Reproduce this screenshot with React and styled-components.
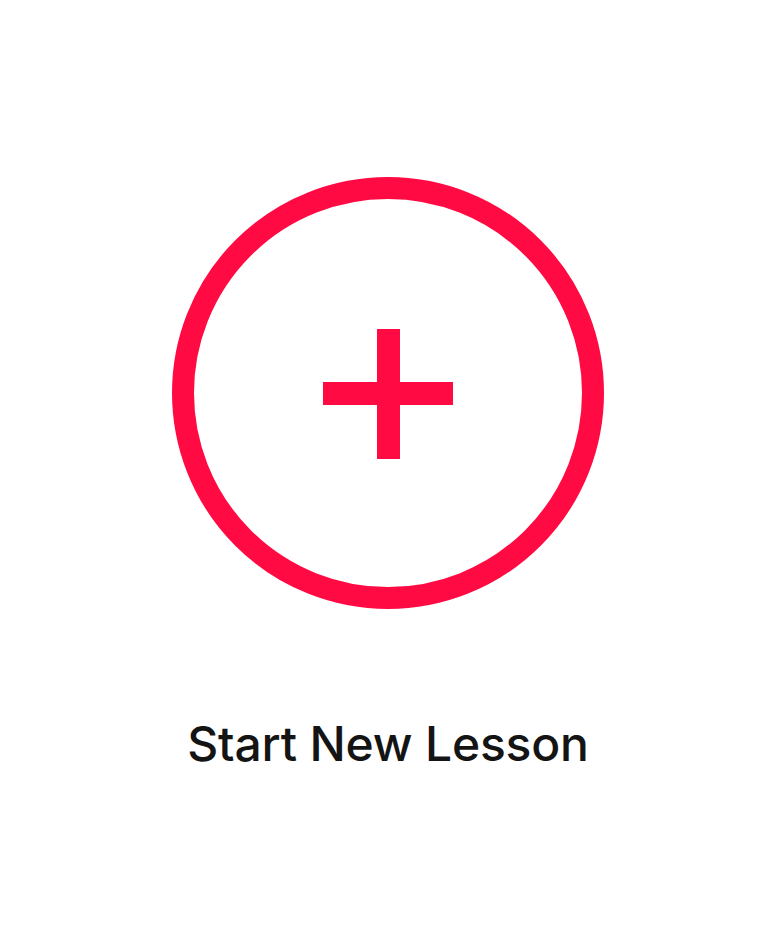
import React from 'react';
import styled, { createGlobalStyle } from 'styled-components';

const GlobalStyle = createGlobalStyle`
  html, body {
    margin: 0;
    padding: 0;
    background: #ffffff;
  }
`;

const PAGE = styled.div`
  width: 776px;
  height: 950px;
  display: flex;
  flex-direction: column;
  align-items: center;
  box-sizing: border-box;
  padding-top: 177px;
  background: #ffffff;
`;

const BUTTON = styled.button`
  display: flex;
  flex-direction: column;
  align-items: center;
  border: none;
  background: none;
  padding: 0;
  cursor: pointer;
`;

const ICON = styled.svg`
  display: block;
  width: 432px;
  height: 432px;
`;

const LABEL = styled.span`
  margin-top: 106px;
  font-family: 'Inter', 'Noto Sans', sans-serif;
  font-weight: 500;
  font-size: 48px;
  line-height: 58px;
  letter-spacing: -0.2px;
  color: #141414;
`;

export default function App() {
  return (
    <>
      <GlobalStyle />
      <PAGE>
        <BUTTON>
          <ICON viewBox="0 0 432 432">
            <circle cx="216" cy="216" r="205" fill="none" stroke="#ff0a43" strokeWidth="22" />
            <rect x="205" y="152" width="23" height="130" fill="#ff0a43" />
            <rect x="151" y="205" width="130" height="23" fill="#ff0a43" />
          </ICON>
          <LABEL>Start New Lesson</LABEL>
        </BUTTON>
      </PAGE>
    </>
  );
}
